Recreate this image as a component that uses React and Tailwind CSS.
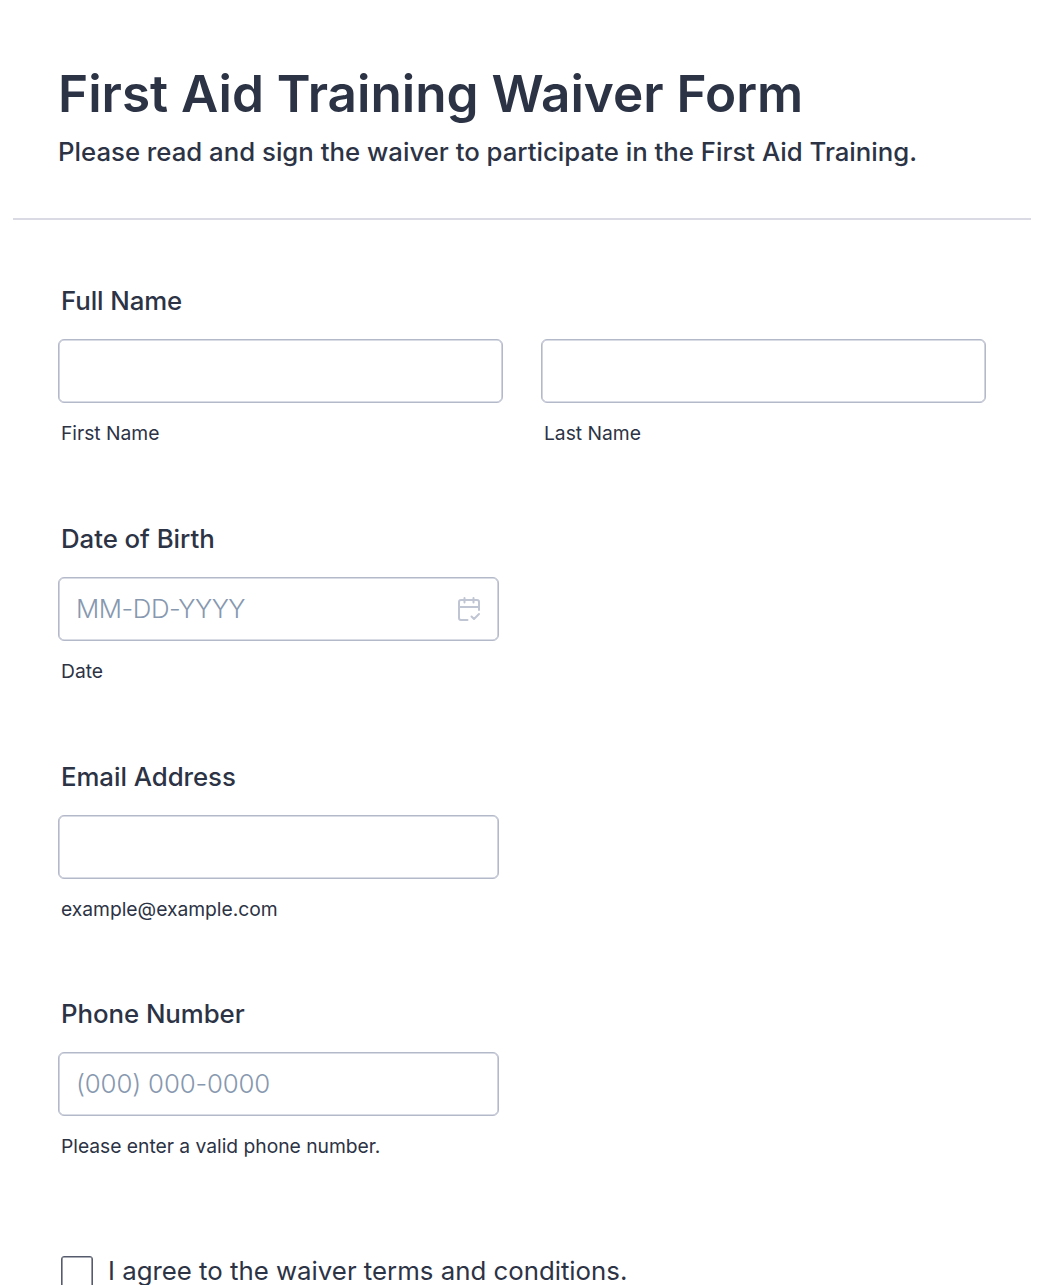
const inputBox = "h-[64px] rounded-[6px] border border-[#b4b9ca] bg-white pl-[17px] pr-[16px] flex items-center justify-between shadow-[inset_0_0_0_0.6px_#b4b9ca]";

function Hint({ children }) {
  return <p className="mt-[17px] pl-[3px] text-[19.3px] leading-[26px] tracking-[-0.03px] whitespace-nowrap">{children}</p>;
}

function Field({ label, hint, placeholder, placeholderStyle = "", children }) {
  return (
    <section className="h-[237.75px]">
      <label className="block pl-[3px] text-[25.8px] leading-[32px] font-medium tracking-[-0.05px]">{label}</label>
      <div className={`mt-[22px] w-[441px] ${inputBox}`}>
        <span className={`text-[25.8px] leading-[32px] font-light text-[#8798af] ${placeholderStyle}`}>{placeholder}</span>
        {children}
      </div>
      <Hint>{hint}</Hint>
    </section>
  );
}

function CalendarIcon() {
  return (
    <svg className="h-[26px] w-[26px]" viewBox="0 0 26 26" fill="none" stroke="#c0c5d3" strokeWidth="2" strokeLinecap="round" strokeLinejoin="round">
      <path d="M11.500 24H5a2 2 0 0 1-2-2V6a2 2 0 0 1 2-2h16a2 2 0 0 1 2 2v8M3 11h20M8.500 2v4.500M17.500 2v4.500M15.500 20.500l2.500 2.500 5-5" />
    </svg>
  );
}

export default function App() {
  return (
    <main className="h-[1285px] overflow-hidden bg-white font-['Inter',sans-serif] text-[#2c3345]">
      <header className="mx-[13px] h-[220px] border-b-2 border-[#d9dae3] pl-[45px] pt-[61px]">
        <h1 className="text-[51.25px] leading-[64px] font-semibold whitespace-nowrap">First Aid Training Waiver Form</h1>
        <p className="mt-[11px] text-[25.75px] leading-[31px] font-medium whitespace-nowrap">Please read and sign the waiver to participate in the First Aid Training.</p>
      </header>
      <form className="px-[58px] pt-[65px]">
        <section className="h-[237.75px]">
          <label className="block pl-[3px] text-[25.8px] leading-[32px] font-medium tracking-[-0.1px]">Full Name</label>
          <div className="mt-[22px] flex gap-[38.500px]">
            <div className="w-[444.5px]">
              <div className={inputBox} />
              <Hint>First Name</Hint>
            </div>
            <div className="w-[444.5px]">
              <div className={inputBox} />
              <Hint>Last Name</Hint>
            </div>
          </div>
        </section>
        <Field label="Date of Birth" hint="Date" placeholder="MM-DD-YYYY" placeholderStyle="tracking-[-0.45px]"><CalendarIcon /></Field>
        <Field label="Email Address" hint="example@example.com" />
        <Field label="Phone Number" hint="Please enter a valid phone number." placeholder="(000) 000-0000" placeholderStyle="tracking-[-0.15px]" />
        <label className="flex items-start gap-[15px] pl-[3px] pt-[20px]">
          <span className="h-[32px] w-[32px] rounded-[3px] border border-[#555b6d] shadow-[inset_0_0_0_0.6px_#555b6d]" />
          <span className="text-[25.8px] leading-[30px]">I agree to the waiver terms and conditions.</span>
        </label>
      </form>
    </main>
  );
}
